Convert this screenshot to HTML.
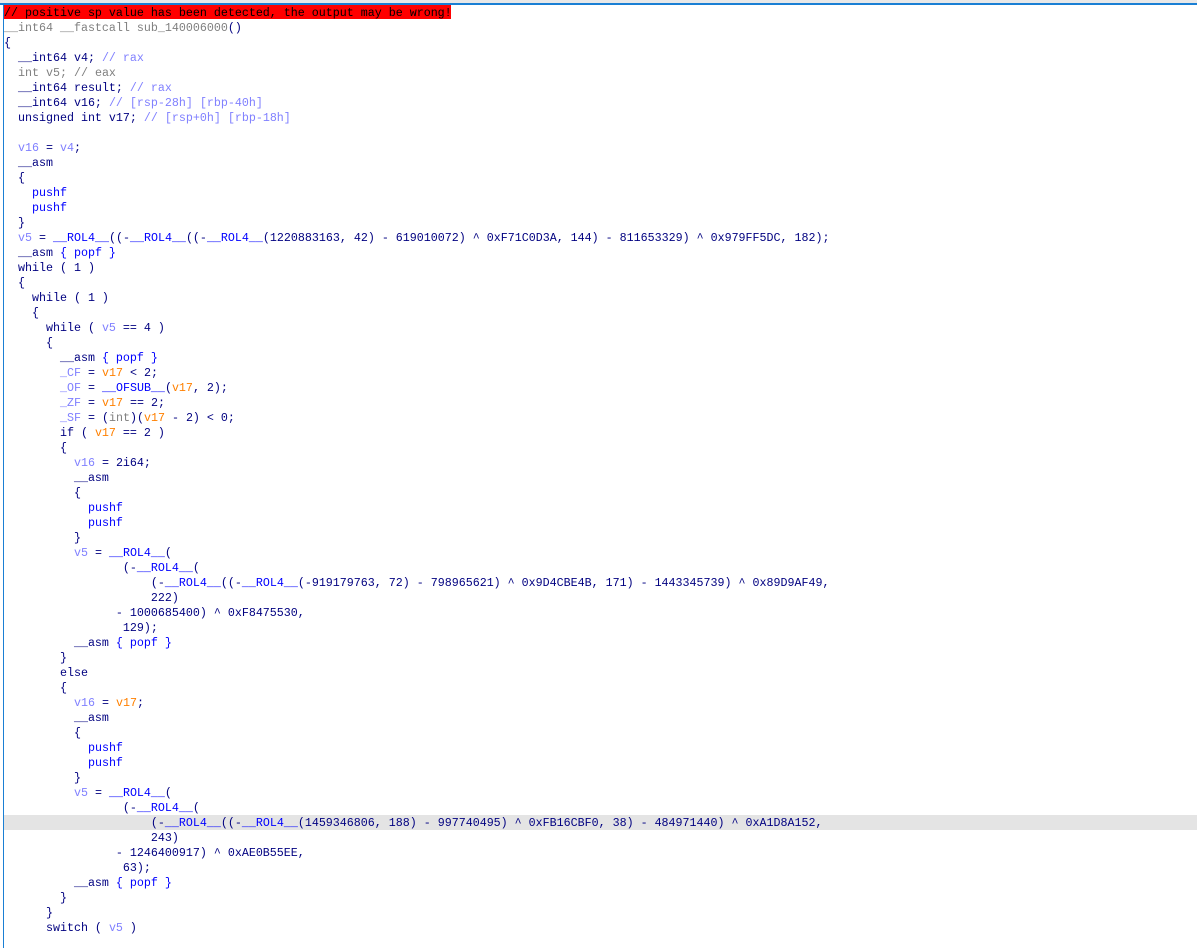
<!DOCTYPE html>
<html><head><meta charset="utf-8"><style>
html,body{margin:0;padding:0;background:#fff;width:1197px;height:948px;overflow:hidden;}
.top{position:absolute;left:0;top:0;width:1197px;height:3px;background:#e8e8e8;}
.bl{position:absolute;left:0;top:3px;width:1197px;height:2px;background:#1a7fd4;}
.lb{position:absolute;left:3px;top:5px;width:1px;height:943px;background:#1a7fd4;}
.hl{position:absolute;left:4px;top:815px;width:1193px;height:15px;background:#e4e4e4;}
.red{position:absolute;left:4px;top:5px;width:447px;height:14px;background:#f00;}
pre{position:absolute;left:4px;top:6px;margin:0;font-family:"Liberation Mono",monospace;font-size:11.67px;line-height:15px;color:#000080;}
.b{color:#0000ff}.p{color:#8080ff}.o{color:#ff8000}.g{color:#808080}
</style></head><body>
<div class="top"></div><div class="bl"></div><div class="lb"></div><div class="hl"></div><div class="red"></div>
<pre><span style="color:#000">// positive sp value has been detected, the output may be wrong!</span>
<span class="g">__int64 __fastcall sub_140006000</span>()
{
  __int64 v4; <span class="p">// rax</span>
  <span class="g">int v5; // eax</span>
  __int64 result; <span class="p">// rax</span>
  __int64 v16; <span class="p">// [rsp-28h] [rbp-40h]</span>
  unsigned int v17; <span class="p">// [rsp+0h] [rbp-18h]</span>

  <span class="p">v16</span> = <span class="p">v4</span>;
  __asm
  {
    <span class="b">pushf</span>
    <span class="b">pushf</span>
  }
  <span class="p">v5</span> = <span class="b">__ROL4__</span>((-<span class="b">__ROL4__</span>((-<span class="b">__ROL4__</span>(1220883163, 42) - 619010072) ^ 0xF71C0D3A, 144) - 811653329) ^ 0x979FF5DC, 182);
  __asm <span class="b">{ popf }</span>
  while ( 1 )
  {
    while ( 1 )
    {
      while ( <span class="p">v5</span> == 4 )
      {
        __asm <span class="b">{ popf }</span>
        <span class="p">_CF</span> = <span class="o">v17</span> &lt; 2;
        <span class="p">_OF</span> = <span class="b">__OFSUB__</span>(<span class="o">v17</span>, 2);
        <span class="p">_ZF</span> = <span class="o">v17</span> == 2;
        <span class="p">_SF</span> = (<span class="g">int</span>)(<span class="o">v17</span> - 2) &lt; 0;
        if ( <span class="o">v17</span> == 2 )
        {
          <span class="p">v16</span> = 2i64;
          __asm
          {
            <span class="b">pushf</span>
            <span class="b">pushf</span>
          }
          <span class="p">v5</span> = <span class="b">__ROL4__</span>(
                 (-<span class="b">__ROL4__</span>(
                     (-<span class="b">__ROL4__</span>((-<span class="b">__ROL4__</span>(-919179763, 72) - 798965621) ^ 0x9D4CBE4B, 171) - 1443345739) ^ 0x89D9AF49,
                     222)
                - 1000685400) ^ 0xF8475530,
                 129);
          __asm <span class="b">{ popf }</span>
        }
        else
        {
          <span class="p">v16</span> = <span class="o">v17</span>;
          __asm
          {
            <span class="b">pushf</span>
            <span class="b">pushf</span>
          }
          <span class="p">v5</span> = <span class="b">__ROL4__</span>(
                 (-<span class="b">__ROL4__</span>(
                     (-<span class="b">__ROL4__</span>((-<span class="b">__ROL4__</span>(1459346806, 188) - 997740495) ^ 0xFB16CBF0, 38) - 484971440) ^ 0xA1D8A152,
                     243)
                - 1246400917) ^ 0xAE0B55EE,
                 63);
          __asm <span class="b">{ popf }</span>
        }
      }
      switch ( <span class="p">v5</span> )</pre>
</body></html>
